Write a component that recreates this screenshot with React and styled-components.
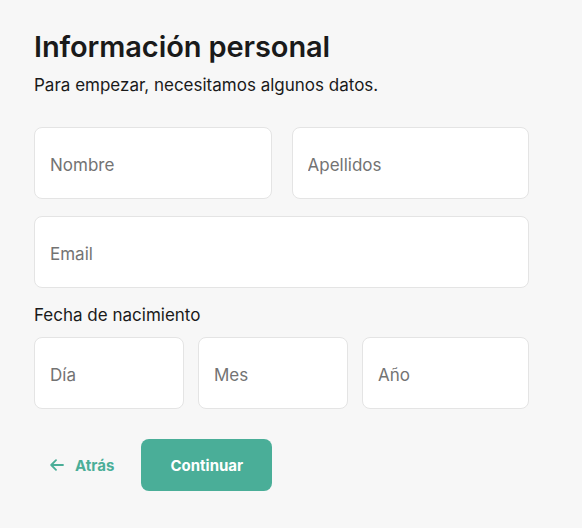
import styled, { createGlobalStyle } from "styled-components";

const GlobalStyle = createGlobalStyle`
  html, body {
    margin: 0;
    padding: 0;
    background: #f7f7f7;
  }
  body {
    font-family: Inter, "Liberation Sans", sans-serif;
    color: #1a1a1a;
  }
`;

const App = () => {
  return (
    <Page>
      <GlobalStyle />
      <Title>Información personal</Title>
      <Subtitle>Para empezar, necesitamos algunos datos.</Subtitle>
      <Form>
        <Row>
          <Field placeholder="Nombre" />
          <Field placeholder="Apellidos" />
        </Row>
        <Field placeholder="Email" />
        <Label>Fecha de nacimiento</Label>
        <DateRow>
          <Field placeholder="Día" />
          <Field placeholder="Mes" />
          <Field placeholder="Año" />
        </DateRow>
        <Actions>
          <BackButton type="button">
            <svg width="14" height="12" viewBox="0 0 14 12" fill="none">
              <path d="M13 6H1.5M6 1.2L1.2 6 6 10.8" stroke="currentColor" strokeWidth="1.8" strokeLinecap="round" strokeLinejoin="round" />
            </svg>
            Atrás
          </BackButton>
          <ContinueButton type="button">Continuar</ContinueButton>
        </Actions>
      </Form>
    </Page>
  );
};

const Page = styled.div`
  width: 495px;
  padding: 29px 0 0 34px;
`;

const Title = styled.h1`
  margin: 0;
  font-size: 29px;
  font-weight: 600;
  letter-spacing: -0.1px;
  line-height: 36px;
`;

const Subtitle = styled.p`
  margin: 9px 0 0 0;
  font-size: 17px;
  line-height: 22px;
`;

const Form = styled.div`
  display: flex;
  flex-direction: column;
  margin-top: 31px;
`;

const Row = styled.div`
  display: grid;
  grid-template-columns: 1fr 1fr;
  gap: 20px;
  margin-bottom: 17px;
`;

const DateRow = styled.div`
  display: grid;
  grid-template-columns: 150px 150px 1fr;
  gap: 14px;
`;

const Field = styled.input`
  box-sizing: border-box;
  width: 100%;
  height: 72px;
  padding: 3px 15px 0 15px;
  border: 1px solid #e4e4e4;
  border-radius: 8px;
  background: #ffffff;
  font-family: Inter, "Liberation Sans", sans-serif;
  font-size: 17px;
  outline: none;

  &::placeholder {
    color: #737373;
  }
`;

const Label = styled.div`
  margin: 17px 0 12px 0;
  font-size: 17px;
  line-height: 20px;
`;

const Actions = styled.div`
  display: flex;
  align-items: center;
  gap: 27px;
  margin-top: 30px;
`;

const BackButton = styled.button`
  display: flex;
  align-items: center;
  gap: 11px;
  border: none;
  background: none;
  padding: 0 0 0 16px;
  color: #4aae98;
  font-family: Inter, "Liberation Sans", sans-serif;
  font-size: 15px;
  font-weight: 700;
  cursor: pointer;
`;

const ContinueButton = styled.button`
  width: 131px;
  height: 52px;
  border: none;
  border-radius: 8px;
  background: #4aae98;
  color: #ffffff;
  font-family: Inter, "Liberation Sans", sans-serif;
  font-size: 15px;
  font-weight: 700;
  cursor: pointer;
`;

export default App;
